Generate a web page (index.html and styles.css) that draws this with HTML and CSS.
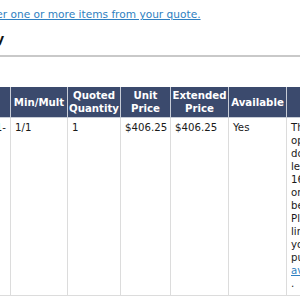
FILE: index.html
```html
<!DOCTYPE html>
<html lang="en">
<head>
<meta charset="utf-8">
<title>Quote</title>
<link rel="stylesheet" href="styles.css">
</head>
<body>
<div class="page">
  <p class="intro"><a href="#" class="intro-link">Click here to order one or more items from your quote.</a></p>
  <h2 class="section-title">Quote Summary</h2>
  <table class="quote-table">
    <colgroup>
      <col class="c-part">
      <col class="c-min">
      <col class="c-qty">
      <col class="c-unit">
      <col class="c-ext">
      <col class="c-avail">
      <col class="c-note">
    </colgroup>
    <thead>
      <tr>
        <th>Part Number</th>
        <th>Min/Mult</th>
        <th>Quoted Quantity</th>
        <th>Unit Price</th>
        <th>Extended Price</th>
        <th>Available</th>
        <th></th>
      </tr>
    </thead>
    <tbody>
      <tr>
        <td class="part">LT1-</td>
        <td>1/1</td>
        <td>1</td>
        <td>$406.25</td>
        <td>$406.25</td>
        <td>Yes</td>
        <td class="note">This<br>option<br>does not<br>lead time<br>16 weeks<br>or more<br>before<br>Please<br>limit<br>your<br>purchase<br><a href="#" class="note-link">available</a><br>.</td>
      </tr>
    </tbody>
  </table>
</div>
</body>
</html>
```

FILE: styles.css
```css
html, body {
  margin: 0;
  padding: 0;
  background: #ffffff;
  overflow: hidden;
}

body {
  font-family: "DejaVu Sans", Verdana, sans-serif;
  font-size: 10.2px;
  line-height: 13px;
  color: #1a1a1a;
}

.page {
  width: 300px;
}

.intro {
  margin: 8px 0 0 -91px;
  font-size: 10.6px;
  white-space: nowrap;
}

.intro-link {
  color: #2f7fc1;
  text-decoration: underline;
}

.section-title {
  margin: 10px 0 0;
  padding: 0 0 8px;
  font-size: 13px;
  line-height: 16px;
  font-weight: bold;
  color: #111;
  border-bottom: 2px solid #c9c9c9;
  white-space: nowrap;
  text-indent: -114px;
  overflow: hidden;
}

.quote-table {
  margin: 30px 0 0 -110px;
  border-collapse: collapse;
  table-layout: fixed;
  width: 536px;
}

.c-part { width: 120px; }
.c-min { width: 57px; }
.c-qty { width: 53px; }
.c-unit { width: 50px; }
.c-ext { width: 58px; }
.c-avail { width: 58px; }
.c-note { width: 140px; }

.quote-table th {
  background: #3b4a6d;
  color: #ffffff;
  font-weight: bold;
  text-align: center;
  vertical-align: middle;
  padding: 2px 1px;
  border: 1px solid #c7ccd6;
  border-top: 0;
  line-height: 13px;
}

.quote-table td {
  vertical-align: top;
  padding: 3px 4px 5px;
  border: 1px solid #dcdcdc;
  border-top: 0;
  line-height: 13px;
  white-space: nowrap;
}

.quote-table td.part {
  text-align: right;
}

.note-link {
  color: #2f7fc1;
  text-decoration: underline;
}
```
